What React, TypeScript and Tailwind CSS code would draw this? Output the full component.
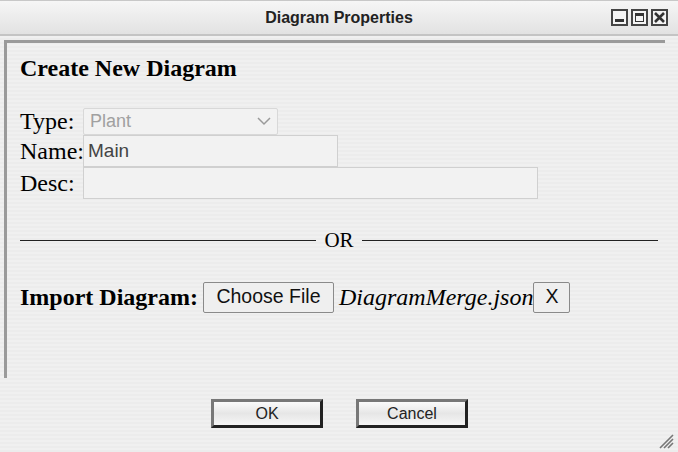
import React from "react";

export default function App() {
  const serif = { fontFamily: '"Liberation Serif", "Times New Roman", serif' };
  return (
    <div
      className="relative w-[678px] h-[452px] overflow-hidden flex flex-col bg-[repeating-linear-gradient(180deg,#f0f0f0_0px,#f0f0f0_2px,#ececec_2px,#ececec_4px)] text-black"
    >
      {/* Title bar */}
      <div className="h-[36px] shrink-0 flex items-center relative bg-[linear-gradient(180deg,#f6f6f6,#e2e2e2)] border-t border-t-[#c8c8c8] border-b-2 border-b-[#c4c4c4]">
        <div className="flex-1 text-center font-['Liberation_Sans',Arial,sans-serif] font-bold text-[16px] text-[#222]">
          Diagram Properties
        </div>
        <div className="absolute right-[10px] top-[8px] flex gap-[3px]">
          <div className="w-[17px] h-[17px] border-2 border-[#444] bg-[#f4f4f4] flex items-end justify-center pb-[2px]">
            <div className="w-[9px] h-[3px] bg-[#333]" />
          </div>
          <div className="w-[17px] h-[17px] border-2 border-[#444] bg-[#f4f4f4] flex items-center justify-center">
            <div className="w-[9px] h-[9px] border border-[#333] border-t-[3px]" />
          </div>
          <div className="w-[17px] h-[17px] border-2 border-[#444] bg-[#f4f4f4] flex items-center justify-center">
            <svg width="11" height="11" viewBox="0 0 11 11">
              <path d="M1 1 L10 10 M10 1 L1 10" stroke="#333" strokeWidth="2.6" />
            </svg>
          </div>
        </div>
      </div>

      {/* Inset content */}
      <div className="ml-[4px] mt-[4px] w-[661px] h-[338px] shrink-0 border-t-[3px] border-l-[3px] border-[#9a9a9a] pl-[13px] pr-[4px]" style={serif}>
        <div className="mt-[10px] text-[24px] font-bold leading-[30px]">Create New Diagram</div>

        <div className="mt-[24px] flex flex-col">
          <div className="flex items-center h-[28px]">
            <span className="text-[24px] leading-[28px] w-[63px]">Type:</span>
            <div className="w-[195px] h-[27px] border border-[#d8d8d8] bg-[#f2f2f2] rounded-[2px] flex items-center justify-between px-[6px] font-['Liberation_Sans',Arial,sans-serif] text-[18px] text-[#a0a0a0]">
              <span>Plant</span>
              <svg width="14" height="9" viewBox="0 0 14 9">
                <path d="M1 1 L7 7 L13 1" stroke="#9a9a9a" strokeWidth="1.5" fill="none" />
              </svg>
            </div>
          </div>
          <div className="flex items-center h-[32px]">
            <span className="text-[24px] leading-[28px] w-[63px]">Name:</span>
            <div className="w-[255px] h-[32px] border border-[#d0d0d0] bg-[#f2f2f2] flex items-center px-[4px] font-['Liberation_Sans',Arial,sans-serif] text-[19px] text-[#444]">
              Main
            </div>
          </div>
          <div className="flex items-center h-[32px]">
            <span className="text-[24px] leading-[28px] w-[63px]">Desc:</span>
            <div className="w-[455px] h-[32px] border border-[#d0d0d0] bg-[#f2f2f2]" />
          </div>
        </div>

        <div className="mt-[29px] flex items-center pr-[3px]">
          <div className="flex-1 h-px bg-[#222]" />
          <span className="px-[8px] text-[21px] leading-[24px]">OR</span>
          <div className="flex-1 h-px bg-[#222]" />
        </div>

        <div className="mt-[27px] flex items-center">
          <span className="text-[24px] font-bold mr-[5px]">Import Diagram:</span>
          <div className="w-[131px] h-[31px] border border-[#8a8a8a] rounded-[2px] bg-[#efefef] flex items-center justify-center font-['Liberation_Sans',Arial,sans-serif] text-[19.5px] text-[#111]">
            Choose File
          </div>
          <span className="ml-[5px] italic text-[24px]">DiagramMerge.json</span>
          <div className="w-[37px] h-[31px] border border-[#8a8a8a] rounded-[2px] bg-[#efefef] flex items-center justify-center font-['Liberation_Sans',Arial,sans-serif] text-[19.5px] text-[#111]">
            X
          </div>
        </div>
      </div>

      {/* Footer buttons */}
      <div className="mt-[21px] flex pl-[211px] gap-[33px] font-['Liberation_Sans',Arial,sans-serif]">
        <div className="w-[112px] h-[29px] border-[3px] border-t-[#777] border-l-[#777] border-r-[#222] border-b-[#222] bg-[linear-gradient(180deg,#fafafa,#e6e6e6_50%,#f6f6f6)] flex items-center justify-center text-[16px] text-[#222]">
          OK
        </div>
        <div className="w-[112px] h-[29px] border-[3px] border-t-[#777] border-l-[#777] border-r-[#222] border-b-[#222] bg-[linear-gradient(180deg,#fafafa,#e6e6e6_50%,#f6f6f6)] flex items-center justify-center text-[16px] text-[#222]">
          Cancel
        </div>
      </div>

      {/* Resize grip */}
      <svg className="absolute right-[4px] bottom-[3px]" width="16" height="16" viewBox="0 0 16 16">
        <path d="M2 15 L15 2 M6 15 L15 6 M10 15 L15 10" stroke="#777" strokeWidth="1.6" />
      </svg>
    </div>
  );
}
